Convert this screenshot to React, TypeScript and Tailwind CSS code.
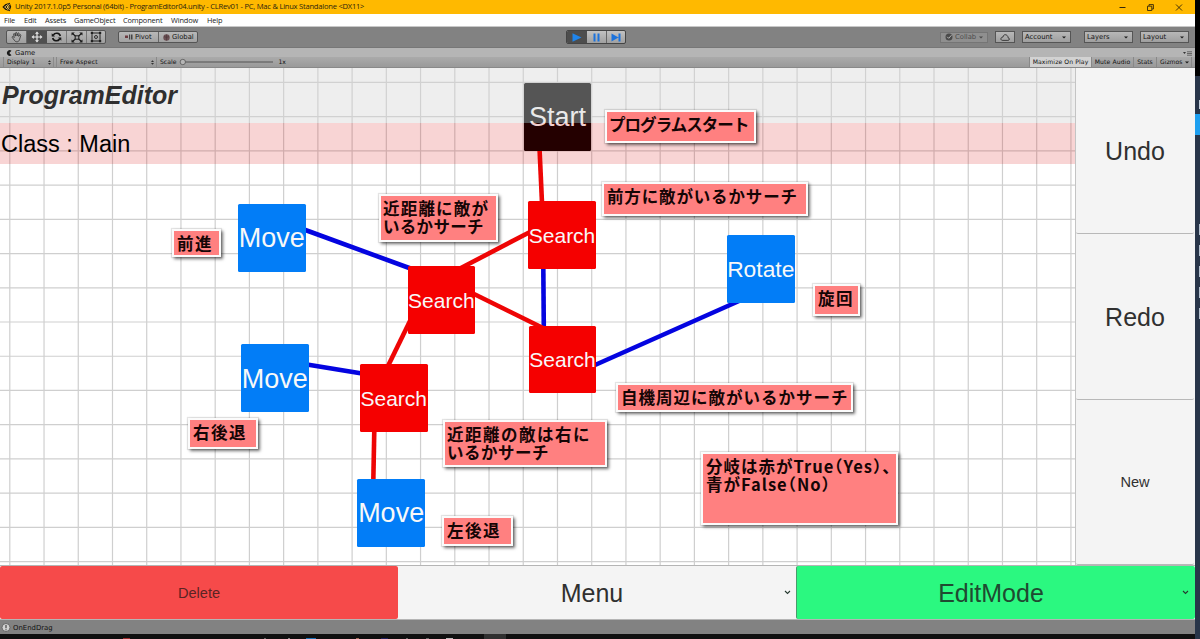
import React from 'react';

type NodeItem = { x: number; y: number; label: string; cls: string };

const nodes: NodeItem[] = [
  { x: 523.7, y: 15, label: 'Start', cls: 'bg-black text-[27px] pt-[2px]' },
  { x: 238, y: 136, label: 'Move', cls: 'bg-[#027df7] text-[27px] pt-[2px]' },
  { x: 528.3, y: 133.2, label: 'Search', cls: 'bg-[#f50000] text-[21px] pt-px' },
  { x: 407.6, y: 198.3, label: 'Search', cls: 'bg-[#f50000] text-[21px]' },
  { x: 528.8, y: 257.6, label: 'Search', cls: 'bg-[#f50000] text-[21px] pt-px' },
  { x: 727, y: 167.2, label: 'Rotate', cls: 'bg-[#027df7] text-[22.8px] pt-px' },
  { x: 241, y: 276.3, label: 'Move', cls: 'bg-[#027df7] text-[27px] pt-[2px]' },
  { x: 360, y: 296, label: 'Search', cls: 'bg-[#f50000] text-[21px] pt-px' },
  { x: 357.4, y: 411, label: 'Move', cls: 'bg-[#027df7] text-[27px] pt-[2px]' },
];

type Edge = { p: [number, number, number, number]; color: string };

const RED = '#ee0505';
const BLUE = '#0404e0';

const edges: Edge[] = [
  { p: [539.5, 80, 542, 135], color: RED },
  { p: [543.3, 198, 543.8, 260], color: BLUE },
  { p: [530, 164, 459, 201], color: RED },
  { p: [473, 225.5, 543, 260], color: RED },
  { p: [412, 201, 304, 161.5], color: BLUE },
  { p: [410, 253, 388, 298], color: RED },
  { p: [362, 305.5, 307, 296.5], color: BLUE },
  { p: [374.3, 362, 373.3, 413], color: RED },
  { p: [595, 297, 739, 233], color: BLUE },
];

type Line = { text: string; cls: string };
type Note = { x: number; y: number; w: number; h: number; lines: Line[]; cls: string };

const notes: Note[] = [
  { x: 605, y: 42, w: 151, h: 33, lines: [{ text: 'プログラムスタート', cls: 'tracking-[-0.95px]' }], cls: 'pl-[2px] pt-[4px]' },
  { x: 602, y: 114, w: 206, h: 34, lines: [{ text: '前方に敵がいるかサーチ', cls: 'tracking-[0.85px]' }], cls: 'pl-[3px] pt-[4px]' },
  {
    x: 379, y: 126, w: 119, h: 48,
    lines: [
      { text: '近距離に敵が', cls: 'tracking-[1.2px]' },
      { text: 'いるかサーチ', cls: 'tracking-[0.3px]' },
    ],
    cls: 'pl-[2px] pt-[4px]',
  },
  { x: 172, y: 161, w: 49, h: 28, lines: [{ text: '前進', cls: 'tracking-[1.6px]' }], cls: 'pl-[3px] pt-[4px]' },
  { x: 813, y: 216, w: 47, h: 32, lines: [{ text: '旋回', cls: 'tracking-[1.4px]' }], cls: 'pl-[3px] pt-[4px]' },
  { x: 616, y: 315, w: 237, h: 29, lines: [{ text: '自機周辺に敵がいるかサーチ', cls: 'tracking-[1px]' }], cls: 'pl-[3px] pt-[4px]' },
  { x: 188, y: 350, w: 70, h: 31, lines: [{ text: '右後退', cls: 'tracking-[1.5px]' }], cls: 'pl-[3px] pt-[4px]' },
  {
    x: 443, y: 352, w: 164, h: 47,
    lines: [
      { text: '近距離の敵は右に', cls: 'tracking-[1.5px]' },
      { text: 'いるかサーチ', cls: 'tracking-[0.5px]' },
    ],
    cls: 'pl-[2px] pt-[4px]',
  },
  { x: 442, y: 448, w: 71, h: 30, lines: [{ text: '左後退', cls: 'tracking-[1.5px]' }], cls: 'pl-[3px] pt-[4px]' },
  {
    x: 701, y: 384, w: 197, h: 73,
    lines: [
      { text: '分岐は赤がTrue（Yes）、', cls: "tracking-[1px] [font-feature-settings:'halt']" },
      { text: '青がFalse（No）', cls: "tracking-[1px] [font-feature-settings:'halt']" },
    ],
    cls: 'pl-[3px] pt-[4px]',
  },
];

const vLines = Array.from({ length: 32 }, (_, i) => 9.8 + i * 34.23);
const hLines = Array.from({ length: 15 }, (_, i) => 14.4 + i * 34.23);

function Caret({ className = '' }: { className?: string }) {
  return (
    <svg className={className} width="4" height="3" viewBox="0 0 4 3">
      <path d="M0 0.4h4L2 2.6z" fill="#1c1c1c" />
    </svg>
  );
}

function UpDown() {
  return (
    <svg width="3" height="5" viewBox="0 0 3 5">
      <path d="M0 2L1.5 0.3 3 2zM0 3L1.5 4.7 3 3z" fill="#333" />
    </svg>
  );
}

function Chevron() {
  return (
    <svg width="7" height="5" viewBox="0 0 7 5">
      <path d="M1 1l2.5 2.4L6 1" fill="none" stroke="#263a30" strokeWidth="1.1" />
    </svg>
  );
}

function TitleBar() {
  return (
    <header className="flex h-[14px] shrink-0 items-center bg-[#ffb900] pl-[2px] font-['Open_Sans',sans-serif] text-[7.6px] text-[#2b240f]">
      <svg width="10" height="10" viewBox="0 0 10 10" className="mr-[3px]">
        <path d="M0.4 5L3.2 2.2 7.6 0.7 9.2 4.8 7.6 9.3 3.2 7.8z" fill="#17130a" />
        <path d="M2.6 5L6.5 2.1M2.6 5L6.5 7.9M5 5h2.8M7.8 2.4L5 5l2.8 2.6" stroke="#ffd45a" strokeWidth="0.9" fill="none" />
      </svg>
      <span className="whitespace-nowrap tracking-[-0.245px]">
        Unity 2017.1.0p5 Personal (64bit) - ProgramEditor04.unity - CLRev01 - PC, Mac &amp; Linux Standalone &lt;DX11&gt;
      </span>
      <div className="ml-auto flex items-center gap-[21px] pr-[12px]">
        <svg width="7" height="7" viewBox="0 0 7 7"><path d="M0.5 3.5h6" stroke="#33270a" /></svg>
        <svg width="7" height="7" viewBox="0 0 7 7">
          <path d="M0.5 2.2h4.3v4.3H0.5zM2 2V0.6h4.4V5H5" stroke="#33270a" strokeWidth="0.9" fill="none" />
        </svg>
        <svg width="8" height="7" viewBox="0 0 8 7"><path d="M1 0.5l6 6M7 0.5l-6 6" stroke="#33270a" strokeWidth="0.9" /></svg>
      </div>
    </header>
  );
}

function MenuBar() {
  return (
    <nav className="flex h-[13px] shrink-0 items-center border-b border-[#c8c8c8] bg-white pt-px pl-[4px] font-['Open_Sans',sans-serif] text-[7.4px] tracking-[-0.15px] text-[#222]">
      <span className="w-[20px]">File</span>
      <span className="w-[21px]">Edit</span>
      <span className="w-[29px]">Assets</span>
      <span className="w-[49px]">GameObject</span>
      <span className="w-[48px]">Component</span>
      <span className="w-[36px]">Window</span>
      <span>Help</span>
    </nav>
  );
}

const btn = 'flex items-center border border-[#555] bg-linear-to-b from-[#b8b8b8] to-[#9f9f9f]';

function Toolbar() {
  return (
    <div className="grid h-[20px] shrink-0 grid-cols-[566px_60px_1fr] items-center bg-[#828282] font-['DejaVu_Sans',sans-serif] text-[6.8px] text-[#151515]">
      <div className="flex items-center pl-[6px]">
        <div className="flex h-[14px] w-[100px] overflow-hidden rounded-[2px] border border-[#555] bg-linear-to-b from-[#b8b8b8] to-[#9f9f9f]">
          <span className="flex w-[20px] items-center justify-center border-r border-[#666]">
            <svg width="12" height="12" viewBox="0 0 12 12" fill="none" stroke="#333" strokeWidth="0.8">
              <path d="M3.2 9L1.2 6.4c-.4-.8.6-1.2 1.2-.6l.8.8L2.6 3.2c0-.9 1-.9 1.2-.1l.6 2L4.6 2c.1-.9 1.2-.9 1.3 0l.2 3 .8-2.7c.3-.8 1.3-.5 1.2.3L7.7 5.4l1-1.5c.6-.7 1.4-.1 1.1.6L8.6 8.3C8 10.3 7.200 10.800 5.800 10.800 4.600 10.800 4 10.200 3.200 9z" />
            </svg>
          </span>
          <span className="flex w-[20px] items-center justify-center bg-[#505050]">
            <svg width="12" height="12" viewBox="0 0 12 12">
              <path d="M6 0.5l2 2.3H4zM6 11.500l2-2.300H4zM0.500 6l2.300-2v4zM11.500 6L9.200 4v4z" fill="#e8e8e8" />
              <path d="M6 2v8M2 6h8" stroke="#e8e8e8" strokeWidth="1.200" />
            </svg>
          </span>
          <span className="flex w-[20px] items-center justify-center border-r border-[#777]">
            <svg width="11" height="10" viewBox="0 0 11 10" fill="none" stroke="#161616" strokeWidth="1.6">
              <path d="M9.300 4C8.600 0.700 4 0.300 2.400 3M1.700 6C2.400 9.300 7 9.700 8.600 7" />
              <path d="M0.700 1.200v3.300H4zM10.300 8.800V5.500H7z" fill="#161616" stroke="none" />
            </svg>
          </span>
          <span className="flex w-[20px] items-center justify-center border-r border-[#777]">
            <svg width="12" height="11" viewBox="0 0 12 11">
              <path d="M1.500 1.500l9 8M10.500 1.500l-9 8" stroke="#1c1c1c" strokeWidth="1.200" />
              <path d="M0.500 0.500h3.300L0.500 3.500zM11.500 0.500H8.200l3.300 3zM0.500 10.500h3.300l-3.300-3zM11.500 10.500H8.200l3.300-3z" fill="#1c1c1c" />
              <path d="M4.200 3.800h3.600v3.400H4.200z" fill="#aaa" stroke="#1c1c1c" />
            </svg>
          </span>
          <span className="flex flex-1 items-center justify-center">
            <svg width="12" height="12" viewBox="0 0 12 12">
              <path d="M2 2h8v8H2z" fill="none" stroke="#222" />
              <path d="M0.800 0.800h2.300v2.300H0.800zM8.900 0.800h2.300v2.300H8.900zM0.800 8.900h2.300v2.300H0.800zM8.900 8.900h2.300v2.300H8.900z" fill="#222" />
              <circle cx="6" cy="6" r="1.500" fill="none" stroke="#222" strokeWidth="0.900" />
            </svg>
          </span>
        </div>
        <div className="ml-[12px] flex h-[12px] w-[80px] rounded-[2px] border border-[#555] bg-linear-to-b from-[#b8b8b8] to-[#a2a2a2]">
          <span className="flex w-[40px] items-center border-r border-[#666] pl-[6px]">
            <svg width="8" height="6" viewBox="0 0 8 6" className="mr-[2px]">
              <path d="M0 1.500h3v2.500H0z" fill="#6d3b40" />
              <path d="M4 0.500h1.200v5H4zM6 0.500h1.500v5H6z" fill="#444" />
            </svg>
            Pivot
          </span>
          <span className="flex items-center pl-[4px]">
            <svg width="7" height="7" viewBox="0 0 7 7" className="mr-[2px]"><circle cx="3.500" cy="3.500" r="3.200" fill="#6b5054" /><path d="M1 2.500c2 1 3 1 5 0M3.500 0.500v6" stroke="#4a3538" strokeWidth="0.600" fill="none" /></svg>
            Global
          </span>
        </div>
      </div>
      <div className="flex h-[14px] overflow-hidden rounded-[2px] border border-[#444] bg-linear-to-b from-[#c2c2c2] to-[#a0a0a0]">
        <span className="flex w-[20px] items-center justify-center bg-[#4d4d4d]">
          <svg width="10" height="9" viewBox="0 0 10 9"><path d="M0.500 0.300v8.400l9-4.200z" fill="#1f84ea" /></svg>
        </span>
        <span className="flex w-[20px] items-center justify-center border-r border-[#666]">
          <svg width="7" height="9" viewBox="0 0 7 9"><path d="M0.500 0.500h2v8h-2zM4.500 0.500h2v8h-2z" fill="#1b72dc" /></svg>
        </span>
        <span className="flex flex-1 items-center justify-center">
          <svg width="10" height="9" viewBox="0 0 10 9"><path d="M0.500 0.500v8l7-4zM7.500 0.500h2v8h-2z" fill="#1b72dc" /></svg>
        </span>
      </div>
      <div className="flex items-center justify-end pr-[6px]">
        <span className="flex h-[11px] w-[48px] items-center border border-[#757575] bg-[#8f8f8f] pl-[4px] text-[#4d4d4d]">
          <svg width="8" height="8" viewBox="0 0 8 8" className="mr-[2px]">
            <circle cx="4" cy="4" r="3.500" fill="#4a4a4a" />
            <path d="M2.200 3.800L3.700 5.300 6.500 2.200" stroke="#b5b5b5" fill="none" />
          </svg>
          Collab
          <Caret className="ml-[3px] opacity-60" />
        </span>
        <span className={btn + ' ml-[7px] h-[12px] w-[20px] justify-center'}>
          <svg width="10" height="7" viewBox="0 0 10 7">
            <path d="M2.400 6.400h5.500c2 0 1.900-2.500.2-2.600C8 1.800 6.600.7 5.200.7 3.800.7 3.200 1.800 3.100 3 .4 3 .2 6.300 2.400 6.400z" fill="none" stroke="#222" strokeWidth="0.800" />
          </svg>
        </span>
        <span className={btn + ' ml-[7px] h-[12px] w-[49px] justify-between pl-[2px] pr-[4px]'}>Account<Caret /></span>
        <span className={btn + ' ml-[13px] h-[12px] w-[49px] justify-between pl-[2px] pr-[4px]'}>Layers<Caret /></span>
        <span className={btn + ' ml-[7px] h-[12px] w-[49px] justify-between pl-[2px] pr-[4px]'}>Layout<Caret /></span>
      </div>
    </div>
  );
}

function GameTab() {
  return (
    <div className="h-[21px] shrink-0 border-t border-[#777] bg-linear-to-b from-[#b9b9b9] to-[#989898] font-['DejaVu_Sans',sans-serif] text-[6.1px] text-[#111]">
      <div className="flex h-[9px] items-center bg-[#b5b5b5] pt-px pl-[6px] text-[6.8px]">
        <svg width="6" height="6" viewBox="0 0 6 6" className="mr-[3px]">
          <path d="M5.500 0.800A2.800 2.800 0 1 0 5.500 5.200L3.300 3z" fill="#1c1c1c" />
        </svg>
        Game
        <svg width="9" height="5" viewBox="0 0 9 5" className="ml-auto mr-[3px]">
          <path d="M0 1h3L1.500 3z" fill="#333" />
          <path d="M4 0.800h5M4 2.500h5M4 4.200h5" stroke="#444" strokeWidth="0.700" />
        </svg>
      </div>
      <div className="flex h-[11px] items-center border-b border-[#888] pl-[3px]">
        <span className="flex h-full w-[51px] items-center justify-between border-x border-[#8a8a8a] pl-[3px] pr-[2px]">Display 1<UpDown /></span>
        <span className="ml-[2px] flex h-full w-[101px] items-center justify-between border-x border-[#8a8a8a] pl-[3px] pr-[2px] tracking-[0.2px]">Free Aspect<UpDown /></span>
        <span className="ml-[3px]">Scale</span>
        <svg width="95" height="8" viewBox="0 0 95 8" className="ml-[3px]">
          <path d="M6 4h88" stroke="#555" strokeWidth="1.200" />
          <circle cx="3.800" cy="4" r="2.700" fill="#b5b5b5" stroke="#555" strokeWidth="0.800" />
        </svg>
        <span className="ml-[4px]">1x</span>
        <div className="ml-auto mr-[3px] flex h-full whitespace-nowrap">
          <span className="flex w-[62px] items-center justify-center border-l border-[#888] bg-[#d2d2d2] tracking-[0.1px]">Maximize On Play</span>
          <span className="flex w-[42px] items-center justify-center border-l border-[#888] tracking-[0.1px]">Mute Audio</span>
          <span className="flex w-[23px] items-center justify-center border-l border-[#888]">Stats</span>
          <span className="flex w-[36px] items-center justify-between border-x border-[#888] pl-[3px] pr-[2px]">Gizmos<Caret /></span>
        </div>
      </div>
    </div>
  );
}

function Canvas() {
  return (
    <main className="relative w-[1075px] shrink-0 overflow-hidden bg-white">
      <svg className="absolute inset-0" width="1076" height="497" viewBox="0 0 1076 497">
        {vLines.map((x) => (
          <line key={'v' + x} x1={x} x2={x} y1={0} y2={497} stroke="#cfcfcf" strokeWidth="1.2" />
        ))}
        {hLines.map((y) => (
          <line key={'h' + y} x1={0} x2={1076} y1={y} y2={y} stroke="#cfcfcf" strokeWidth="1.2" />
        ))}
        {edges.map((e, i) => (
          <line key={i} x1={e.p[0]} y1={e.p[1]} x2={e.p[2]} y2={e.p[3]} stroke={e.color} strokeWidth="4.600" />
        ))}
      </svg>
      {nodes.map((n, i) => (
        <div
          key={i}
          className={'absolute flex h-[67.5px] w-[67.5px] items-center justify-center rounded-[1.5px] leading-none text-[#f8f8f8] ' + n.cls}
          style={{ left: n.x, top: n.y }}
        >
          {n.label}
        </div>
      ))}
      <div className="absolute inset-x-0 top-0 flex h-[55px] items-center bg-[#d4d4d4]/40 pt-px pl-[2px] text-[25px] font-bold text-[#2f2f2f] italic">
        ProgramEditor
      </div>
      <div className="absolute inset-x-0 top-[55px] flex h-[41px] items-center bg-[#d10000]/17 pt-[2px] pl-[1px] text-[23.500px] text-black">
        Class : Main
      </div>
      {notes.map((n) => (
        <div
          key={n.x + '-' + n.y}
          className={"absolute border-2 border-[#fbfbfb] bg-[#ff8080] font-['Noto_Sans_CJK_JP',sans-serif] text-[16.500px] leading-[17.500px] font-bold whitespace-nowrap text-[#150505] shadow-[2px_2px_3px_rgba(0,0,0,0.55),0_0_1px_1px_rgba(0,0,0,0.1)] " + n.cls}
          style={{ left: n.x, top: n.y, width: n.w, height: n.h }}
        >
          {n.lines.map((l) => (
            <div key={l.text} className={l.cls}>{l.text}</div>
          ))}
        </div>
      ))}
    </main>
  );
}

function SidePanel() {
  return (
    <aside className="flex flex-1 flex-col border-l border-[#c4c4c4] bg-[#f4f4f4] pr-px text-[25px] text-[#303030]">
      <button className="h-[166px] rounded-[2px] border-b border-[#b8b8b8] pt-[2px]">Undo</button>
      <button className="h-[166px] rounded-[2px] border-b border-[#b8b8b8] pt-[2px]">Redo</button>
      <button className="flex-1 rounded-[2px] border-b border-[#b8b8b8] pt-[2px] text-[14.600px]">New</button>
    </aside>
  );
}

function ActionBar() {
  return (
    <div className="flex h-[55px] shrink-0 border-y border-[#b5b5b5] text-[25px] text-[#303030]">
      <button className="w-[398px] rounded-[2px] bg-[#f64a4a] pt-[2px] text-[14.600px] text-[#5a2424]">Delete</button>
      <div className="flex w-[398px] items-center bg-[#f4f4f4] pr-[5px]">
        <span className="flex-1 pt-[3px] pl-[2px] text-center">Menu</span>
        <Chevron />
      </div>
      <div className="flex flex-1 items-center rounded-[2px] border-l border-[#4b9a6c] bg-[#2bf880] pr-[6px] text-[#1f4a31]">
        <span className="flex-1 pt-[3px] pl-[3px] text-center">EditMode</span>
        <Chevron />
      </div>
    </div>
  );
}

function DesktopEdge() {
  return (
    <div className="flex w-[5px] shrink-0 flex-col items-end bg-[#283549]">
      <div className="h-[76px] w-full bg-black" />
      <div className="mt-[24px] h-[9px] w-px bg-[#c6d0dc]" />
      <div className="mt-[5px] h-[21px] w-full bg-[#1d9ff0]" />
      <div className="mt-[89px] flex flex-col gap-[10px]">
        {[0, 1, 2, 3, 4].map((i) => (
          <div key={i} className="h-[11px] w-px bg-[#b4c0cf]" />
        ))}
      </div>
    </div>
  );
}

function Taskbar() {
  return (
    <div className="flex h-[5px] shrink-0 items-end bg-[#101010]">
      <i className="ml-[123px] h-px w-[7px] bg-[#9c2c2c]" />
      <i className="ml-[134px] h-px w-[2px] bg-[#666]" />
      <i className="ml-[22px] h-px w-[2px] bg-[#888]" />
      <i className="ml-[16px] h-px w-[10px] bg-[#1b73b8]" />
      <i className="ml-[40px] h-px w-[3px] bg-[#a06a58]" />
      <i className="ml-[22px] h-px w-[7px] bg-[#20205c]" />
      <i className="ml-[18px] h-px w-[2px] bg-[#666]" />
      <i className="ml-[18px] h-px w-[3px] bg-[#666]" />
      <i className="ml-[17px] h-px w-[7px] bg-[#bbb]" />
      <i className="ml-[31px] h-[5px] w-[22px] bg-[#303030]" />
    </div>
  );
}

export default function App() {
  return (
    <div className="flex h-[639px] w-[1200px] overflow-hidden font-['Liberation_Sans',Arial,sans-serif]">
      <div className="flex w-[1195px] flex-col">
        <TitleBar />
        <MenuBar />
        <Toolbar />
        <GameTab />
        <div className="flex h-[497px] shrink-0">
          <Canvas />
          <SidePanel />
        </div>
        <ActionBar />
        <footer className="flex h-[14px] shrink-0 items-center bg-[#828282] pt-[2px] pl-[1px] font-['DejaVu_Sans',sans-serif] text-[6.900px] text-[#111]">
          <svg width="10" height="10" viewBox="0 0 10 10" className="mr-[2px]">
            <circle cx="5" cy="4.500" r="4" fill="#d2d2d2" stroke="#555" strokeWidth="0.800" />
            <path d="M5 2v3.200M5 6.200v1" stroke="#444" strokeWidth="1.200" />
          </svg>
          OnEndDrag
        </footer>
        <Taskbar />
      </div>
      <DesktopEdge />
    </div>
  );
}
